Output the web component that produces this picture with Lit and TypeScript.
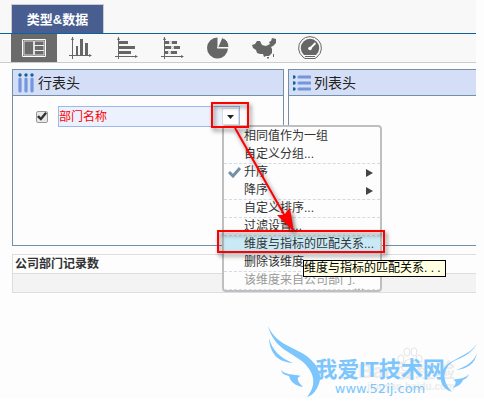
import { LitElement, html, css, svg } from "lit";
import { customElement, state } from "lit/decorators.js";

interface MenuEntry {
  label: string;
  line?: boolean;
  checked?: boolean;
  sub?: boolean;
  hot?: boolean;
  muted?: boolean;
}

const ENTRIES: MenuEntry[] = [
  { label: "相同值作为一组" },
  { label: "自定义分组...", line: true },
  { label: "升序", checked: true, sub: true },
  { label: "降序", sub: true, line: true },
  { label: "自定义排序...", line: true },
  { label: "过滤设置...", line: true },
  { label: "维度与指标的匹配关系...", hot: true },
  { label: "删除该维度", line: true },
  { label: "该维度来自公司部门.", muted: true, line: true },
];

const INK = "#666";

const TOOLS = [
  {
    name: "表格",
    art: svg`<path d="M.5 3.500h23v17H.5z" fill="none" stroke="#fff"/><path d="M2 5h9.500v14H2zM12.500 5H22v14h-9.500z" fill="none" stroke="#ddd"/><path d="M12 9.500h10M12 14.500h10" stroke="#eee"/>`,
  },
  {
    name: "柱形图",
    art: svg`<path d="M4.500 1v22M1 19.500h22" stroke=${INK} fill="none"/><path d="M3 4l1.500-3L6 4zM21 18l3 1.500-3 1.500zM8 10h2v9H8zM12 3h3v16h-3zM17 7h3v12h-3z" fill=${INK}/>`,
  },
  {
    name: "条形图",
    art: svg`<path d="M4.500 1v22M1 20.500h22" stroke=${INK} fill="none"/><path d="M3 4l1.500-3L6 4zM21 19l3 1.500-3 1.500zM5 5h9v3H5zM5 10h16v3H5zM5 15h12v3H5z" fill=${INK}/>`,
  },
  {
    name: "堆积条形图",
    art: svg`<path d="M4.500 1v22M1 20.500h22" stroke=${INK} fill="none"/><path d="M3 4l1.500-3L6 4zM21 19l3 1.500-3 1.500zM5 5h4v3H5zM12 5h5v3h-5zM5 10h6v3H5zM14 10h6v3h-6zM5 15h3v3H5zM11 15h6v3h-6z" fill=${INK}/><path d="M9.500 5.500h2v2h-2zM11.500 10.500h2v2h-2zM8.500 15.500h2v2h-2z" fill="#fff" stroke="#ccc"/>`,
  },
  {
    name: "饼图",
    art: svg`<path d="M11.500 12.500V1.500a10.500 10.500 0 1 0 10.500 11z" fill=${INK}/><path d="M11.500 12L16 1.500A10.500 10.500 0 0 1 23 11.500H12.500z" fill=${INK} stroke="#f8f8f8"/>`,
  },
  {
    name: "地图",
    art: svg`<path d="M0 9l3-1 2-3 3 0 2 4 4 1 4-2-1-2 2-1 1-3 4 1 0 4-3 3-2 1 1 2 0 4-3 3-3 0-2 1-1-3-3 0-3-1-1-3-3-2z" fill=${INK}/><path d="M21 18h1v3h-1zM15 21h2v1.500h-2z" fill=${INK}/>`,
  },
  {
    name: "仪表盘",
    art: svg`<path d="M5 21A11.400 11.400 0 1 1 19 21l-2 1.500H7z" fill="none" stroke=${INK}/><path d="M6 19A9.200 9.200 0 1 1 18 19z" fill=${INK}/><path d="M7 20.500h10" stroke=${INK}/><path d="M12 12.500l5.500-5.500" stroke="#fff" stroke-width="1.800"/><circle cx="12" cy="12.500" r="1.800" fill="#fff"/>`,
  },
];

@customElement("app-root")
export class AppRoot extends LitElement {
  @state() private tool = 0;

  static styles = css`
    :host {
      display: block;
      font: 12px/18px "Liberation Sans", "Noto Sans CJK SC", sans-serif;
      color: #333;
      background: #fdfdfd;
    }
    * {
      box-sizing: border-box;
    }
    button {
      font: inherit;
      color: inherit;
      margin: 0;
      padding: 0;
      border: 0;
      background: none;
      text-align: left;
    }
    .page {
      margin-right: 8px;
    }
    .tabs {
      background: #f8f8f8;
      border-bottom: 1px solid #0f6198;
      padding: 4px 0 0 11px;
      display: flex;
    }
    .tab {
      width: 93px;
      height: 29px;
      border: 1px solid #ccc;
      border-bottom: 0;
      background: #485e90;
      color: #fff;
      font: bold 13px/30px "Liberation Sans", "Noto Sans CJK SC", sans-serif;
      text-align: center;
    }
    .tools {
      display: flex;
      background: #f8f8f8;
      border-bottom: 1px solid #ccc;
      padding-left: 11px;
    }
    .tool {
      width: 46px;
      height: 28px;
      display: grid;
      place-items: center;
    }
    .tool.on {
      background: #6b6b6b;
    }
    .tool svg {
      width: 24px;
      height: 24px;
      display: block;
    }
    .panels {
      display: grid;
      grid-template-columns: 272fr 188fr;
      gap: 4px;
      padding: 6px 0 0 12px;
    }
    .panel {
      border: 1px solid #748fa8;
      min-height: 177px;
    }
    .panel.open {
      border-right: 0;
    }
    .head {
      display: flex;
      align-items: center;
      gap: 3px;
      height: 26px;
      margin: 0;
      padding-left: 4px;
      background: #d4dff7;
      border-bottom: 1px solid #748fa8;
      color: #222;
      font: 14px/24px "Liberation Sans", "Noto Sans CJK SC", sans-serif;
    }
    .head svg {
      width: 18px;
      height: 20px;
    }
    .row {
      display: flex;
      align-items: center;
      gap: 10px;
      padding: 10px 43px 0 23px;
    }
    .tick {
      appearance: none;
      width: 12px;
      height: 12px;
      margin: 0;
      border: 1px solid #999;
      border-radius: 2px;
      background: #e8e8e8;
      display: grid;
      place-items: center;
      flex: none;
    }
    .tick:checked::before {
      content: "";
      width: 10px;
      height: 10px;
      background: #333;
      clip-path: polygon(0 55%, 18% 38%, 38% 58%, 82% 5%, 100% 20%, 40% 92%);
    }
    .field {
      position: relative;
      flex: 1;
      display: flex;
      justify-content: space-between;
      align-items: center;
      height: 21px;
      border: 1px solid #9db8ea;
      background: #ecf2fd;
    }
    .field label {
      color: #f00;
    }
    .drop {
      width: 17px;
      height: 17px;
      background: #fff;
      border: 1px solid #ddd;
      display: grid;
      place-items: center;
    }
    .drop svg {
      width: 7px;
      height: 4px;
    }
    .menu {
      position: absolute;
      top: 18px;
      right: -143px;
      width: 160px;
      border: 2px solid #bfbfbf;
      border-radius: 4px;
      background: #fdfdfd;
      padding-top: 1px;
      z-index: 1;
    }
    .item {
      display: grid;
      grid-template-columns: 20px 1fr 14px;
      align-items: center;
      width: 100%;
      height: 18px;
      line-height: 17px;
      white-space: nowrap;
      border-bottom: 1px solid transparent;
    }
    .item.line {
      border-bottom: 1px dashed #d4d9e6;
    }
    .item.hot {
      background: #c9eaf5;
    }
    .item.muted {
      color: #999;
      grid-template-columns: 20px 110px 1fr;
    }
    .item svg {
      display: block;
    }
    .item .mark {
      margin-left: 4px;
    }
    .rest {
      align-self: end;
      line-height: 6px;
    }
    .frame {
      position: absolute;
      border: 2px solid #f00;
      filter: drop-shadow(2px 3px 2px #0008);
      pointer-events: none;
      z-index: 2;
    }
    .frame.a {
      top: -5px;
      right: -10px;
      width: 38px;
      height: 26px;
    }
    .frame.b {
      top: 123px;
      right: -146px;
      width: 168px;
      height: 23px;
    }
    .arrow {
      position: absolute;
      top: 18px;
      right: -63px;
      width: 72px;
      height: 112px;
      filter: drop-shadow(2px 3px 2px #0008);
      pointer-events: none;
      z-index: 2;
    }
    .tip {
      position: absolute;
      top: 153px;
      right: -207px;
      width: 143px;
      height: 17px;
      border: 1px solid #000;
      background: #ffffe1;
      color: #000;
      line-height: 14px;
      white-space: nowrap;
      z-index: 3;
    }
    .sheet {
      border-collapse: collapse;
      width: calc(100% - 12px);
      margin: 8px 0 0 12px;
    }
    .sheet th,
    .sheet td {
      height: 19px;
      padding: 0 2px;
      border: 1px solid #ddd;
      border-right: 0;
      text-align: left;
      line-height: 18px;
    }
    .sheet td {
      background: #f3f3f3;
    }
    .brand {
      display: flex;
      justify-content: flex-end;
      padding: 32px 5px 0 0;
    }
    .logo {
      position: relative;
      width: 212px;
      height: 74px;
      padding: 33px 0 0 14px;
      display: flex;
      flex-direction: column;
      align-items: center;
      color: #7cc6fd;
    }
    .wings {
      position: absolute;
      inset: 0;
    }
    .name {
      font: bold 22px/24px "Liberation Sans", "Noto Sans CJK SC", sans-serif;
      white-space: nowrap;
      z-index: 1;
    }
    .site {
      font: 13px/14px "DejaVu Sans", sans-serif;
      z-index: 1;
      color: #7cc6fd;
      text-decoration: none;
    }
    .ghost {
      position: absolute;
      right: 24px;
      top: 36px;
      text-align: right;
      color: #ececec;
      font: bold 20px/20px "Liberation Sans", "Noto Sans CJK SC", sans-serif;
      white-space: nowrap;
    }
    .ghost small {
      display: block;
      font-size: 10px;
      line-height: 12px;
    }
    .paw {
      position: absolute;
      left: 130px;
      top: 22px;
    }
  `;

  private renderItem(e: MenuEntry) {
    return html`<button
      role="menuitem"
      class="item ${e.line ? "line" : ""} ${e.hot ? "hot" : ""} ${e.muted ? "muted" : ""}"
    >
      <span
        >${e.checked
          ? html`<svg class="mark" width="13" height="11" viewBox="0 0 13 11">
              <path d="M1 5l4 4 7-8" fill="none" stroke="#748fa8" stroke-width="3" />
            </svg>`
          : ""}</span
      >
      <span>${e.label}</span>
      ${e.muted ? html`<span class="rest">...</span>` : ""}
      ${e.sub
        ? html`<svg width="7" height="8" viewBox="0 0 7 8"><path d="M0 0l7 4-7 4z" fill="#444" /></svg>`
        : ""}
    </button>`;
  }

  render() {
    return html`
      <main class="page">
        <nav class="tabs"><button class="tab">类型&amp;数据</button></nav>
        <div class="tools">
          ${TOOLS.map(
            (t, i) => html`<button
              class="tool ${i === this.tool ? "on" : ""}"
              aria-label=${t.name}
              @click=${() => (this.tool = i)}
            >
              <svg viewBox="0 0 24 24">${t.art}</svg>
            </button>`
          )}
        </div>
        <div class="panels">
          <section class="panel">
            <h2 class="head">
              <svg viewBox="0 0 18 20">
                <path d="M3 6v12M9 6v12M15 6v12" stroke="#7396dc" stroke-width="3.200" stroke-linecap="round" />
                <g fill="#126296">
                  <circle cx="3" cy="2" r="1.700" /><circle cx="9" cy="2" r="1.700" /><circle cx="15" cy="2" r="1.700" />
                </g>
              </svg>
              行表头
            </h2>
            <div class="row">
              <input class="tick" id="dept" type="checkbox" checked />
              <div class="field">
                <label for="dept">部门名称</label>
                <button class="drop" aria-label="维度选项">
                  <svg viewBox="0 0 7 4"><path d="M0 0h7L3.500 4z" fill="#222" /></svg>
                </button>
                <div class="menu" role="menu">${ENTRIES.map((e) => this.renderItem(e))}</div>
                <span class="frame a"></span>
                <span class="frame b"></span>
                <svg class="arrow" viewBox="0 0 72 112">
                  <path d="M5 3L56 93" stroke="#f00" stroke-width="2" />
                  <path d="M64 107L47 90L54 90L60 83z" fill="#f00" />
                </svg>
                <div class="tip" role="tooltip">维度与指标的匹配关系. . .</div>
              </div>
            </div>
          </section>
          <section class="panel open">
            <h2 class="head">
              <svg viewBox="1 0 18 20">
                <path d="M7 4h11M7 10h11M7 16h11" stroke="#7396dc" stroke-width="3.200" stroke-linecap="round" />
                <g fill="#126296">
                  <circle cx="2" cy="4" r="1.700" /><circle cx="2" cy="10" r="1.700" /><circle cx="2" cy="16" r="1.700" />
                </g>
              </svg>
              列表头
            </h2>
          </section>
        </div>
        <table class="sheet">
          <thead>
            <tr><th scope="col">公司部门记录数</th></tr>
          </thead>
          <tbody>
            <tr><td></td></tr>
          </tbody>
        </table>
      </main>
      <footer class="brand">
        <div class="logo">
          <div class="ghost">Bai 度经验<small>jingyan.baidu.com</small></div>
          <svg class="paw" width="26" height="26" viewBox="0 0 26 26">
            <g fill="#fff" stroke="#e4e4e4">
              <ellipse cx="4" cy="12" rx="3" ry="4" /><ellipse cx="10" cy="5" rx="3" ry="4" />
              <ellipse cx="17" cy="5" rx="3" ry="4" /><ellipse cx="22" cy="12" rx="3" ry="4" />
              <path d="M13 12c4 0 5 5 8 8 1 4-4 4-8 4s-9 0-8-4c3-3 4-8 8-8z" />
            </g>
          </svg>
          <svg class="wings" width="212" height="74" viewBox="0 0 212 74">
            <g fill="#7cc6fd">
              <path d="M1 1C8 17 22 21 35 28C50 37 57 50 51 61C48 68 44 71 40 72C49 61 49 49 36 37C22 26 7 23 1 1z" />
              <path d="M2 13C5 25 13 33 26 38C13 37 3 31 2 13z" />
              <path d="M14 45C18 50 26 49 34 51C29 52 30 56 36 62C28 61 23 56 22 51C18 50 15 49 14 45z" />
              <path d="M211 17C206 28 196 32 187 36C177 42 173 54 185 67C176 64 173 58 174 51C176 33 202 34 211 17z" />
              <path d="M210 28C207 36 201 41 189 45C200 44 208 39 210 28z" />
              <path d="M202 49C198 54 193 53 186 55C190 56 189 59 186 63C192 61 195 58 196 55C199 54 201 52 202 49z" />
            </g>
          </svg>
          <span class="name">我爱IT技术网</span>
          <a class="site" href="#site">www.52ij.com</a>
        </div>
      </footer>
    `;
  }
}
